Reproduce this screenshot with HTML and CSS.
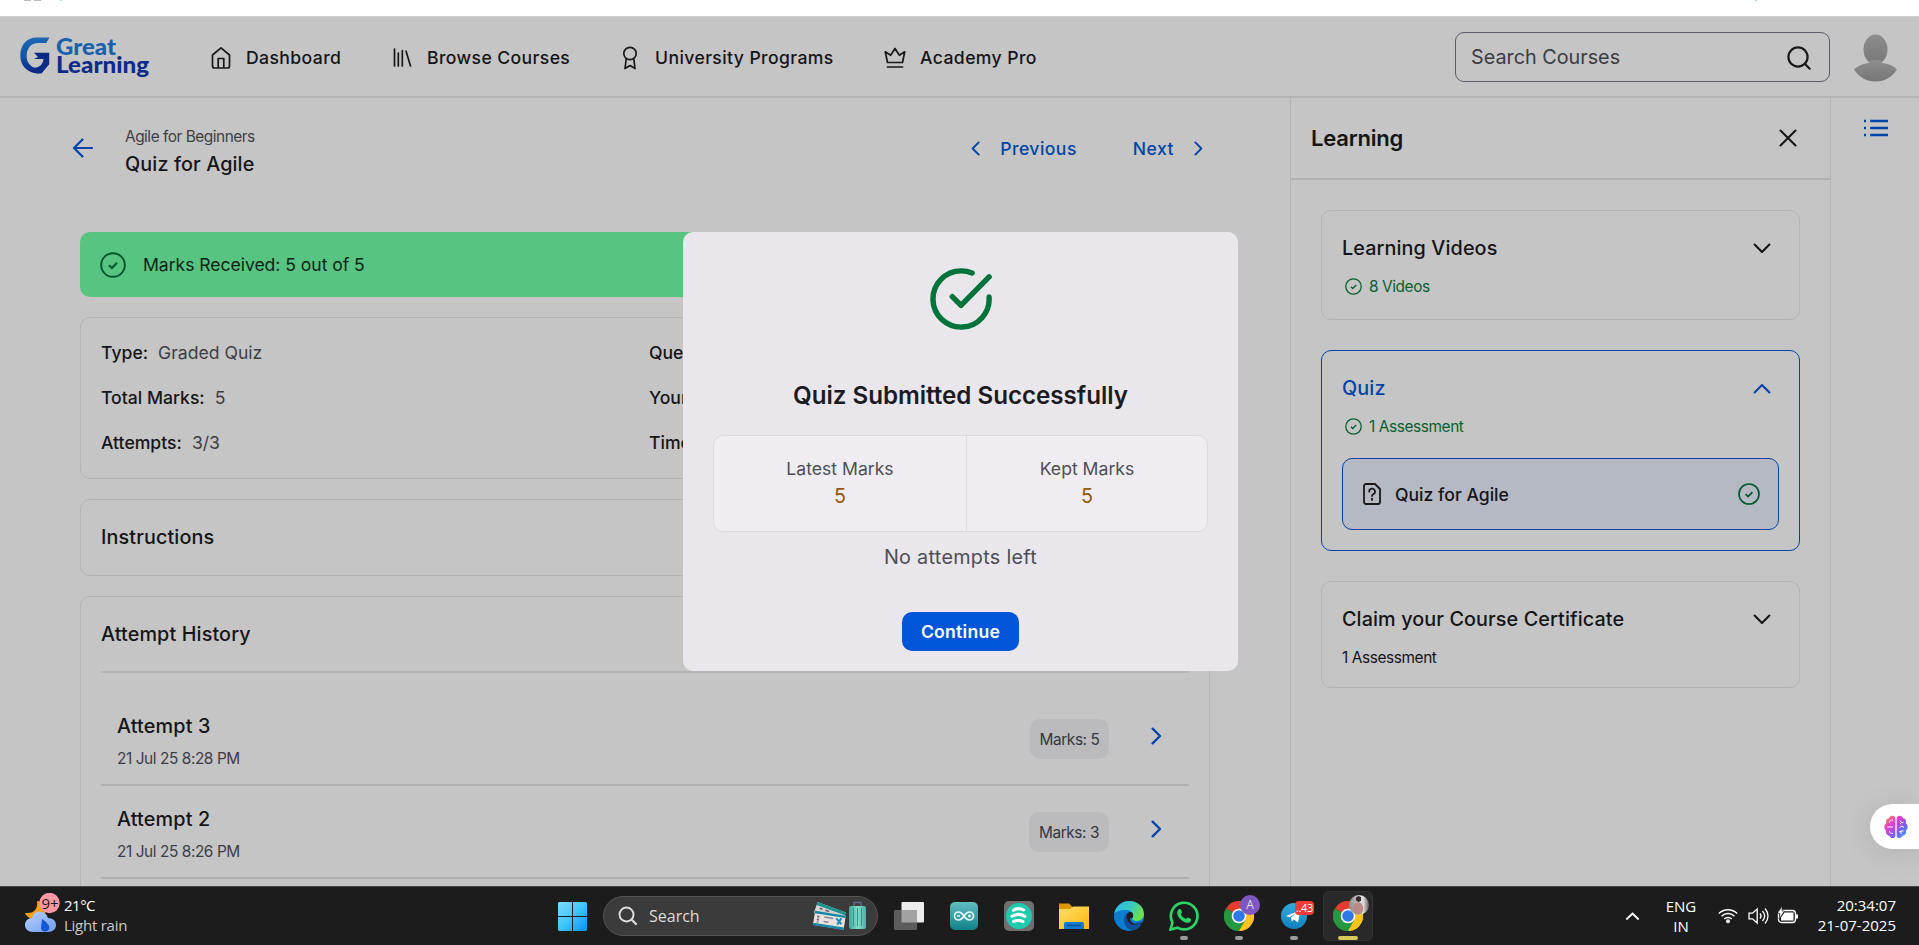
FILE: index.html
```html
<!DOCTYPE html>
<html lang="en">
<head>
<meta charset="utf-8">
<title>Quiz for Agile</title>
<link rel="stylesheet" href="styles.css">
</head>
<body>
<svg class="defs" width="0" height="0">
  <defs>
    <linearGradient id="gMark" x1="0" y1="0" x2="0" y2="1"><stop offset="0" stop-color="#1a69b5"/><stop offset=".55" stop-color="#1552a4"/><stop offset="1" stop-color="#0b2280"/></linearGradient>
    <linearGradient id="win" x1="0" y1="0" x2="1" y2="1"><stop offset="0" stop-color="#7fdcff"/><stop offset=".5" stop-color="#40c4fb"/><stop offset="1" stop-color="#0a93f5"/></linearGradient>
    <linearGradient id="cloud" x1="0" y1="0" x2="1" y2="1"><stop offset="0" stop-color="#b9d2fb"/><stop offset="1" stop-color="#6d9df0"/></linearGradient>
    <linearGradient id="brain" x1="0" y1="0" x2="1" y2="1"><stop offset="0" stop-color="#fb9a3c"/><stop offset=".35" stop-color="#e63ad0"/><stop offset=".65" stop-color="#7a5cf5"/><stop offset="1" stop-color="#22b4fb"/></linearGradient>
    <linearGradient id="man" x1="0" y1="0" x2="0" y2="1"><stop offset="0" stop-color="#8d8d8d"/><stop offset="1" stop-color="#777"/></linearGradient>
    <linearGradient id="folder" x1="0" y1="0" x2="1" y2="1"><stop offset="0" stop-color="#ffdf6b"/><stop offset="1" stop-color="#fbb70c"/></linearGradient>
    <linearGradient id="edgeTop" x1="0" y1="0" x2="1" y2=".4"><stop offset="0" stop-color="#2fb5ee"/><stop offset=".6" stop-color="#37c9c0"/><stop offset="1" stop-color="#6be04e"/></linearGradient>
    <linearGradient id="tg" x1="0" y1="0" x2="0" y2="1"><stop offset="0" stop-color="#33aadf"/><stop offset="1" stop-color="#1280bd"/></linearGradient>
    <linearGradient id="ard" x1="0" y1="0" x2="0" y2="1"><stop offset="0" stop-color="#62bcc1"/><stop offset="1" stop-color="#118288"/></linearGradient>
    <linearGradient id="bag" x1="0" y1="0" x2="1" y2="0"><stop offset="0" stop-color="#3fa79b"/><stop offset=".5" stop-color="#83dccb"/><stop offset="1" stop-color="#4bb3a5"/></linearGradient>
    <symbol id="check" viewBox="0 0 24 24"><circle cx="12" cy="12" r="10.9" fill="none" stroke="currentColor" stroke-width="1.8"/><path d="M8.300 12.200l2.700 2.600 4.700-4.900" fill="none" stroke="currentColor" stroke-width="1.900"/></symbol>
    <symbol id="down" viewBox="0 0 18 11"><path d="M1.6 1.6L9 9l7.4-7.4" fill="none" stroke="currentColor" stroke-width="2.1" stroke-linecap="round" stroke-linejoin="round"/></symbol>
    <symbol id="right" viewBox="0 0 11 18"><path d="M1.6 1.6L9 9l-7.4 7.4" fill="none" stroke="currentColor" stroke-width="2.3" stroke-linecap="round" stroke-linejoin="round"/></symbol>
    <symbol id="chrome" viewBox="0 0 30 30"><path d="M15 15L2 7.500A15 15 0 0 1 28 7.500z" fill="#e33b2e"/><path d="M15 15L28 7.500A15 15 0 0 1 15 30z" fill="#fcc31e"/><path d="M15 15L15 30A15 15 0 0 1 2 7.500z" fill="#24973f"/><path d="M15 7.500h13A15 15 0 0 1 15 30l6.500-11.200z" fill="#fcc31e"/><path d="M8.500 18.700L2 7.500A15 15 0 0 0 15 30l6.500-11.200z" fill="#24973f"/><circle cx="15" cy="15" r="7.300" fill="#fff"/><circle cx="15" cy="15" r="5.800" fill="#2f78ea"/></symbol>
  </defs>
</svg>

<div class="strip"><i class="tick tick-a"></i><i class="tick tick-b"></i><i class="tick tick-c"></i><i class="tick tick-d"></i></div>

<header class="header">
  <svg class="logo" width="132" height="44" viewBox="0 0 132 44">
    <path d="M29.500 2.500H17C7 2.500.300 9.800.300 20.500.300 31 7.500 38 18 38.500l4.800-4.700C13 34.300 6.600 29.500 6.600 21 6.600 12.500 11.800 8 18.500 8h7.800z" fill="url(#gMark)"/>
    <path d="M14 17.800h15.200v11.400L21.500 38.500H17l-3-5.800c4.500.600 8.800-2.700 9.500-8.600H14l4-2z" fill="#0b2a86"/>
    <text class="logo-great" x="36" y="20.400" textLength="60" lengthAdjust="spacingAndGlyphs">Great</text>
    <text class="logo-learning" x="36" y="38.300" textLength="93" lengthAdjust="spacingAndGlyphs">Learning</text>
  </svg>
  <nav class="nav">
    <a class="nav-item"><svg class="ic" width="26" height="26" viewBox="0 0 26 26"><path d="M4.500 10L13 2.800l8.500 7.200v11a2 2 0 0 1-2 2h-13a2 2 0 0 1-2-2zM10.200 23v-9.500h5.600V23"/></svg><span>Dashboard</span></a>
    <a class="nav-item"><svg class="ic" width="26" height="26" viewBox="0 0 26 26"><path d="M5.500 4v17M9.300 8v13M13.300 5.500V21M17 6l4.500 15"/></svg><span>Browse Courses</span></a>
    <a class="nav-item"><svg class="ic" width="26" height="26" viewBox="0 0 26 26"><circle cx="13" cy="8.500" r="6.200"/><path d="M9.200 14l-1.200 9.500 5-3 5 3L16.800 14"/></svg><span>University Programs</span></a>
    <a class="nav-item"><svg class="ic" width="26" height="26" viewBox="0 0 26 26"><path d="M5.500 17.500L3.300 6.800l5.300 3.500L13 3.500l4.400 6.800 5.300-3.500-2.200 10.700zM5.500 22h15"/></svg><span>Academy Pro</span></a>
  </nav>
  <div class="search"><span>Search Courses</span><svg class="ic ic-search" width="26" height="26" viewBox="0 0 26 26"><circle cx="12" cy="12" r="9.600"/><path d="M18.800 18.800l4.900 4.900"/></svg></div>
  <svg class="avatar" width="43" height="48" viewBox="0 0 43 48"><ellipse cx="21.500" cy="15.500" rx="12" ry="15" fill="url(#man)"/><path d="M16 26h11l1 3c8 1 12 3.500 15 6.500C38 43 31 47.500 21.500 47.500S5 43 0 35.500C3 32.500 7 30 15 29z" fill="url(#man)"/></svg>
</header>

<div class="body">
  <main class="main">
    <div class="crumbs">
      <svg class="back" width="22" height="22" viewBox="0 0 22 22"><path d="M20 11H2.500M10.500 2.500L2 11l8.500 8.500"/></svg>
      <div class="crumb-text"><span class="course">Agile for Beginners</span><span class="lesson">Quiz for Agile</span></div>
      <div class="pager">
        <svg class="chev flip" width="9" height="15"><use href="#right"/></svg><span class="prev">Previous</span>
        <span class="next">Next</span><svg class="chev" width="9" height="15"><use href="#right"/></svg>
      </div>
    </div>

    <div class="stack">
      <div class="banner"><svg width="26" height="26"><use href="#check"/></svg><span>Marks Received: 5 out of 5</span></div>

      <section class="card details">
        <div><b>Type:</b><span>Graded Quiz</span></div><div><b>Questions:</b></div>
        <div><b>Total Marks:</b><span>5</span></div><div><b>Your Marks:</b></div>
        <div><b>Attempts:</b><span>3/3</span></div><div><b>Time:</b></div>
      </section>

      <section class="card instructions"><h2>Instructions</h2></section>

      <section class="card history">
        <h2>Attempt History</h2>
        <div class="attempt first">
          <div class="attempt-text"><h3>Attempt 3</h3><span>21 Jul 25 8:28 PM</span></div>
          <span class="badge">Marks: 5</span>
          <svg class="go" width="11" height="18"><use href="#right"/></svg>
        </div>
        <div class="attempt">
          <div class="attempt-text"><h3>Attempt 2</h3><span>21 Jul 25 8:26 PM</span></div>
          <span class="badge wide">Marks: 3</span>
          <svg class="go" width="11" height="18"><use href="#right"/></svg>
        </div>
      </section>
    </div>
  </main>

  <aside class="learning">
    <div class="learning-head"><h1>Learning</h1><svg class="close" width="18" height="18" viewBox="0 0 18 18"><path d="M1.500 1.500l15 15M16.500 1.500l-15 15"/></svg></div>
    <div class="modules">
      <section class="module videos">
        <div class="module-head"><h2>Learning Videos</h2><svg width="18" height="11"><use href="#down"/></svg></div>
        <p class="done"><svg width="17" height="17"><use href="#check"/></svg>8 Videos</p>
      </section>
      <section class="module active">
        <div class="module-head"><h2>Quiz</h2><svg class="up" width="18" height="11"><use href="#down"/></svg></div>
        <p class="done"><svg width="17" height="17"><use href="#check"/></svg>1 Assessment</p>
        <div class="item"><svg class="file" width="18" height="22" viewBox="0 0 18 22"><path d="M3 1h9l5 5v13a2 2 0 0 1-2 2H3a2 2 0 0 1-2-2V3a2 2 0 0 1 2-2zM6.200 8.600a2.900 2.900 0 1 1 4 2.600c-.900.400-1.200.900-1.200 1.900M9 15.600v1.400"/></svg><span>Quiz for Agile</span><svg class="item-ok" width="22" height="22"><use href="#check"/></svg></div>
      </section>
      <section class="module claim">
        <div class="module-head"><h2>Claim your Course Certificate</h2><svg width="18" height="11"><use href="#down"/></svg></div>
        <p>1 Assessment</p>
      </section>
    </div>
  </aside>

  <div class="rail"><svg width="25" height="18" viewBox="0 0 25 18"><path d="M7.200 2H25M7.200 9H25M7.200 16H25M1 2h2M1 9h2M1 16h2"/></svg></div>
</div>

<div class="modal">
  <svg class="modal-check" width="62" height="62" viewBox="0 0 64 64"><path d="M43.500 5.200A29 29 0 0 0 32 3 29 29 0 1 0 61 30M23 29.500l9 9L61 9.200"/></svg>
  <h2>Quiz Submitted Successfully</h2>
  <div class="score">
    <div><span class="score-label">Latest Marks</span><span class="score-value">5</span></div>
    <div><span class="score-label">Kept Marks</span><span class="score-value">5</span></div>
  </div>
  <p>No attempts left</p>
  <button class="continue">Continue</button>
</div>

<div class="assistant"><svg width="24" height="24" viewBox="0 0 24 24"><path d="M11.300 2.500C9.500-.300 5.600.500 5 3.300 2.500 3.500 1.500 6 2.300 8-.300 10-.300 13.500 2 15.500c-.600 3 1 5 3.500 5.200 1 2.800 4.500 3.200 5.800.800zM12.700 2.500C14.500-.300 18.400.500 19 3.300c2.500.200 3.500 2.700 2.700 4.700 2.600 2 2.600 5.500.300 7.500.600 3-1 5-3.500 5.200-1 2.800-4.500 3.200-5.800.800z" fill="url(#brain)"/><path d="M3 12h6M5.500 7.500c0-2 1.500-2.500 3.500-2.500M5.500 16c0 2 1.500 2.500 3.500 2.500M16 5.500l1.500 2h2M17.500 7.500L16 9M15.500 12.500l2.500-1.500 2 1.500M15 17l2-1h2.500M17 16v3" fill="none" stroke="#fff" stroke-width="1"/></svg></div>

<footer class="taskbar">
  <div class="weather">
    <svg width="36" height="42" viewBox="0 0 36 42"><path d="M12 8c1 7-2 13-12 12 3 7 14 9 20 2L22 10z" fill="#f5a01d"/><path d="M8 39C3 39 0 36 0 32c0-4 3-7 7-7 1-5 5-7 9-6 4 0 6 3 7 6 5 0 8 3 8 7s-3 7-8 7z" fill="url(#cloud)"/><path d="M17 26c6 4 8 7 7 10-2 4-8 3-8-1z" fill="#1457dc"/><circle cx="24.500" cy="10" r="10.200" fill="#fe98a2"/><text class="nine" x="16.500" y="15.500">9+</text></svg>
    <div class="weather-text"><span>21°C</span><span class="dim">Light rain</span></div>
  </div>
  <div class="apps">
    <svg class="start" width="29" height="29" viewBox="0 0 29 29"><path d="M1 0h13v14H0V1zM15 0h13l1 1v13H15zM0 15h14v14H1l-1-1zM15 15h14v13l-1 1H15z" fill="url(#win)"/></svg>
    <div class="tsearch"><svg width="20" height="20" viewBox="0 0 20 20"><circle cx="8.500" cy="8.500" r="7" fill="none" stroke="#dedede" stroke-width="1.900"/><path d="M13.500 13.500l4.500 4.500" stroke="#dedede" stroke-width="2.200" stroke-linecap="round"/></svg><span>Search</span>
      <svg class="trip" width="54" height="32" viewBox="0 0 54 32"><g transform="rotate(20 4 4)"><rect x="4" y="2" width="30" height="11" fill="#d9d6cf"/><path d="M4 3.500h30" stroke="#1b9490" stroke-width="3"/><path d="M8 7h3M14 7h4" stroke="#6b5f78" stroke-width="1.600"/></g><g transform="rotate(9 2 12)"><rect x="2" y="11" width="31" height="14" fill="#e7e3dc"/><path d="M2 12h31M2 24h31" stroke="#1787a8" stroke-width="2.400"/><path d="M6 15v7" stroke="#6b5f78" stroke-width="2" stroke-dasharray="2 1"/><path d="M12 15.500h9M12 20h5" stroke="#8b8398" stroke-width="1.600"/><path d="M24 15l6 5M29 14l-3 7" stroke="#2488b7" stroke-width="2"/></g><path d="M41 6V2.500h7V6" fill="none" stroke="#66698c" stroke-width="1.400"/><rect x="36" y="6" width="17" height="23" rx="2" fill="url(#bag)"/><path d="M40.500 8v18M44.500 8v18M48.500 8v18" stroke="#2e9587" stroke-width="1"/></svg>
    </div>
    <span class="app"><svg width="30" height="28" viewBox="0 0 30 28"><rect x="7.500" width="22.500" height="20.500" rx="1" fill="#ececec"/><rect y="8" width="23" height="20" rx="1" fill="#5c5c5c"/><rect x="7.500" y="8" width="15.500" height="12.500" fill="#a2a2a2"/></svg></span>
    <span class="app"><svg width="28" height="28" viewBox="0 0 28 28"><rect width="28" height="28" rx="5" fill="url(#ard)"/><path d="M14 14c-2-3-4-4-5.500-4a4 4 0 0 0 0 8c1.500 0 3.500-1 5.500-4zc2-3 4-4 5.500-4a4 4 0 0 1 0 8c-1.500 0-3.500-1-5.500-4zM7 14h3M18 14h3M19.500 12.500v3" fill="none" stroke="#e8f7f7" stroke-width="1.700"/></svg></span>
    <span class="app"><svg width="30" height="30" viewBox="0 0 30 30"><rect width="30" height="30" rx="5" fill="#6f6f6f"/><circle cx="15" cy="15" r="13" fill="#21c9ae"/><path d="M9.500 9.300c3-2 7-2 10-.300M8 15.300c4.500-2.500 9.500-2.300 13 .200M9.500 20.500c3.500-1.500 6.500-1.500 9.500 0" fill="none" stroke="#fff" stroke-width="3" stroke-linecap="round"/></svg></span>
    <span class="app"><svg width="30" height="28" viewBox="0 0 30 28"><path d="M0 1.500h10l3 3V8H0z" fill="#dd9702"/><path d="M0 7h11l3-2.500h16V27H0z" fill="url(#folder)"/><path d="M5 27v-5a2 2 0 0 1 2-2h16a2 2 0 0 1 2 2v5z" fill="#1279d0"/><path d="M8 23.500h14" stroke="#0b4c91" stroke-width="1.300"/></svg></span>
    <span class="app"><svg width="30" height="30" viewBox="0 0 30 30"><circle cx="15" cy="15" r="15" fill="#0b7ed4"/><path d="M0 13C2 4 9 0 15 0c9 0 15 6 15 13 0 4-3 7-7 7-3 0-5-1-5-2.500 0-1 1-2 1-3.500 0-3-3-5-7-5C6 9 1 11 0 13z" fill="url(#edgeTop)"/><path d="M10 18c0-4 3-6 6-6-3 2-1 10 5 10 3 0 5-1 6-1.500 1 0 1 .500.500 1.500-2 4-5 6.500-9 7.500C13 28 10 24 10 18z" fill="#0d4f9b"/><path d="M18 17.500c1-1 2-3 .500-5.500-2-2-6-.500-6 3 0 4 3 9 9 9 3 0 6-1.500 7.500-3.500l1 .500-2 4-2-2C21 25 16 22 16 17z" fill="#1c1c1c"/></svg></span>
    <span class="app run"><svg width="30" height="30" viewBox="0 0 30 30"><path d="M1.500 28.500l2-7A13.300 13.300 0 1 1 8.500 26.600z" fill="none" stroke="#2cd366" stroke-width="2.700"/><path d="M9.500 8.500c1-1 2-.800 2.500.300l1 2.300c.300.800-1.200 1.700-1 2.400 1 2 2.500 3.500 4.700 4.300.800.300 1.500-1.500 2.300-1.300l2.500 1.200c1 .500.700 1.700 0 2.700-1.500 2-5 1.600-8-.500-3-2-5-5-5.300-7.200-.200-1.700.500-3.200 1.300-4.200z" fill="#2cd366"/></svg></span>
    <span class="app run"><svg width="30" height="30"><use href="#chrome"/></svg><i class="bubble purple">A</i></span>
    <span class="app run"><svg width="26" height="26" viewBox="0 0 26 26"><circle cx="13" cy="13" r="13" fill="url(#tg)"/><path d="M5 13L19.500 7.300 17 19.500l-4.200-3-2 2-.800-4 6-5-7.500 4.700z" fill="#fff"/></svg><i class="count">..43</i></span>
    <span class="app run current"><svg width="30" height="30"><use href="#chrome"/></svg><i class="bubble photo"></i></span>
  </div>
  <div class="tray">
    <svg class="tray-up" width="15" height="9" viewBox="0 0 15 9"><path d="M1.300 7.500l6.200-6 6.200 6" fill="none" stroke="#fff" stroke-width="1.800"/></svg>
    <div class="lang"><span>ENG</span><span>IN</span></div>
    <svg class="wifi" width="20" height="17" viewBox="0 0 20 17"><path d="M.800 6.500a13 13 0 0 1 18.400 0M3.500 9.200a9.200 9.200 0 0 1 13 0M6.200 12a5.400 5.400 0 0 1 7.600 0" fill="none" stroke="#fff" stroke-width="1.400"/><circle cx="10" cy="14.300" r="2" fill="#fff"/></svg>
    <svg class="sound" width="21" height="18" viewBox="0 0 21 18"><path d="M1 6.200h3.500L9.200 2v14l-4.700-4.200H1zM12 6.500c1.300 1.500 1.300 3.500 0 5M14.500 4c2.600 3 2.600 7 0 10M17 1.500c4 4.500 4 10.500 0 15" fill="none" stroke="#fff" stroke-width="1.300"/></svg>
    <svg class="battery" width="22" height="18" viewBox="0 0 22 18"><rect x="1.500" y="4.500" width="17" height="12" rx="3" fill="none" stroke="#fff" stroke-width="1.300"/><path d="M7.500 6.500h9v8H4v-3zM19 8.500h2v4h-2z" fill="#fff"/><path d="M5 0L.500 7.500H3L2 13l5.500-8H5z" fill="#fff" stroke="#1c1c1c" stroke-width=".6"/></svg>
    <div class="clock"><span>20:34:07</span><span>21-07-2025</span></div>
  </div>
</footer>
</body>
</html>
```
FILE: styles.css
```css
* { box-sizing: border-box; }
body {
  margin: 0;
  width: 1919px;
  height: 945px;
  overflow: hidden;
  display: flex;
  flex-direction: column;
  background: #c5c5c5;
  color: #151518;
  font-family: Inter, "Liberation Sans", sans-serif;
  font-size: 17.6px;
  position: relative;
}
h1, h2, h3, p { margin: 0; }
svg { display: block; flex: none; }
.defs { position: absolute; }

/* top strip */
.strip { height: 16px; flex: none; background: #fff; display: flex; align-items: flex-start; }
.tick { height: 1px; background: #b9b9b9; width: 7px; flex: none; }
.tick-a { margin-left: 24px; }
.tick-b { margin-left: 3px; }
.tick-c { margin-left: 19px; width: 2px; background: #9fe3e3; }
.tick-d { margin-left: 1693px; width: 2px; background: #9fe3e3; }

/* header */
.header {
  height: 82px;
  flex: none;
  border-top: 1px solid #cfcfcf;
  border-bottom: 2px solid #b5b5b5;
  display: flex;
  align-items: center;
}
.logo { margin-left: 20px; overflow: visible; }
.logo text { font-family: Lato, "Open Sans", sans-serif; font-weight: 900; font-size: 23px; }
.logo-great { fill: #1960ab; }
.logo-learning { fill: #0c2b8b; }
.nav { margin-left: 56px; padding-top: 2px; display: grid; grid-template-columns: 181px 228px 265px 170px; font-weight: 500; }
.nav-item { display: flex; align-items: center; gap: 12px; white-space: nowrap; letter-spacing: .4px; }
.ic { fill: none; stroke: #18181b; stroke-width: 1.7; stroke-linecap: round; stroke-linejoin: round; }
.search {
  margin-left: auto;
  width: 375px;
  height: 50px;
  border: 1px solid #5d5d68;
  border-radius: 9px;
  padding: 0 17px 0 15px;
  display: flex;
  align-items: center;
  justify-content: space-between;
  color: #3b3c43;
  font-size: 19.8px;
}
.ic-search { stroke-width: 2.2; margin-top: 3px; }
.avatar { margin: 3px 22px 0 24px; }

/* page body */
.body { height: 788px; flex: none; display: flex; overflow: hidden; }
.main { width: 1290px; padding: 0 80px; }
.crumbs { height: 134px; display: flex; align-items: flex-start; position: relative; left: -8px; width: 1145px; }
.back { margin-top: 39px; fill: none; stroke: #0344a8; stroke-width: 2.2; stroke-linecap: round; stroke-linejoin: round; }
.crumb-text { display: flex; flex-direction: column; margin: 27px 0 0 31px; }
.course { font-size: 15.4px; line-height: 24px; color: #3d3e45; letter-spacing: -.47px; }
.lesson { font-size: 19.8px; line-height: 30px; font-weight: 500; letter-spacing: .1px; }
.pager { margin: 36px 14px 0 auto; display: flex; align-items: center; height: 28px; color: #0344a8; font-weight: 500; letter-spacing: .45px; }
.prev { margin: 0 56px 0 20px; }
.next { margin-right: 20px; }
.flip { transform: scaleX(-1); }

.stack { display: flex; flex-direction: column; gap: 20px; }
.banner { height: 65px; border-radius: 10px; background: #57c481; display: flex; align-items: center; padding-left: 20px; gap: 17px; color: #0e2418; letter-spacing: -.05px; }
.banner svg { color: #00562d; }
.card { border: 1px solid #b4b4b6; border-radius: 10px; }
.details { height: 162px; padding: 12px 20px; display: grid; grid-template-columns: 548px 1fr; grid-auto-rows: 45px; align-items: center; }
.details b { font-weight: 500; margin-right: 10px; }
.details span { color: #3d3e45; }
.card h2 { font-size: 19.8px; font-weight: 500; letter-spacing: .12px; }
.instructions { height: 77px; padding: 0 20px 1px; display: flex; align-items: center; }
.history { height: 400px; padding: 0 20px; }
.history h2 { height: 76px; line-height: 75px; border-bottom: 2px solid #b5b5b5; }
.attempt { height: 93px; border-bottom: 2px solid #b1b1b1; padding: 15px 27px 0 16px; display: flex; }
.attempt.first { height: 113px; padding-top: 35px; }
.attempt-text { flex: 1; }
.attempt h3 { margin: 0; font-size: 19.8px; font-weight: 500; line-height: 36px; letter-spacing: .15px; }
.attempt-text span { display: block; font-size: 15.4px; line-height: 30px; color: #3d3e45; letter-spacing: -.42px; }
.badge { width: 79px; height: 40px; margin: 11px 42px 0 0; border-radius: 10px; background: #bbbbbe; color: #35363c; font-size: 15.4px; letter-spacing: -.42px; display: flex; align-items: center; justify-content: center; }
.badge.wide { width: 80px; }
.go { color: #0344a8; margin-top: 19px; }

/* learning panel */
.learning { width: 541px; border-left: 1px solid #b4b4b6; border-right: 1px solid #b4b4b6; }
.learning-head { height: 82px; border-bottom: 2px solid #b2b2b2; padding: 0 33px 0 20px; display: flex; align-items: center; justify-content: space-between; }
.learning-head h1 { font-size: 22px; font-weight: 600; letter-spacing: -.2px; }
.close { fill: none; stroke: #151518; stroke-width: 2.1; stroke-linecap: round; }
.modules { padding: 30px 30px 0; display: flex; flex-direction: column; gap: 30px; }
.module { border: 1px solid #b4b4b6; border-radius: 10px; padding: 17px 20px; }
.module-head { height: 40px; display: flex; align-items: center; justify-content: space-between; padding-right: 8px; }
.module h2 { font-size: 19.8px; font-weight: 500; letter-spacing: .1px; }
.module p { height: 37px; display: flex; align-items: center; font-size: 15.4px; letter-spacing: -.4px; }
.module .done { color: #07602f; gap: 7px; padding-left: 3px; }
.videos { height: 110px; }
.active { height: 201px; border-color: #0344a8; }
.active .module-head { color: #0344a8; }
.up { transform: scaleY(-1); }
.claim { height: 107px; }
.claim p { height: 36px; }
.item { margin-top: 13px; height: 72px; border: 1px solid #0344a8; border-radius: 10px; background: #b5b9c4; display: flex; align-items: center; padding: 0 18px 0 20px; font-weight: 500; }
.file { fill: none; stroke: #18181b; stroke-width: 1.8; stroke-linecap: round; stroke-linejoin: round; margin-right: 14px; }
.item-ok { margin-left: auto; color: #00592e; }
.rail { flex: 1; padding: 21px 0 0 32px; }
.rail svg { fill: none; stroke: #0344a8; stroke-width: 2.4; }

/* result dialog */
.modal {
  position: absolute;
  left: 683px;
  top: 232px;
  width: 555px;
  height: 439px;
  border-radius: 10px;
  background: #e9e7ec;
  display: flex;
  flex-direction: column;
  align-items: center;
}
.modal-check { margin-top: 36px; fill: none; stroke: #00733a; stroke-width: 5.6; stroke-linecap: round; stroke-linejoin: round; }
.modal h2 { margin-top: 48px; height: 36px; line-height: 36px; font-size: 24.2px; font-weight: 600; color: #1b1b21; letter-spacing: -.03px; }
.score { margin-top: 21px; width: 495px; height: 97px; border: 1px solid #dbdadf; border-radius: 10px; background: #efedf2; display: grid; grid-template-columns: 253px 1fr; }
.score > div { display: flex; flex-direction: column; align-items: center; padding-top: 19px; }
.score > div:first-child { border-right: 1px solid #dbdadf; }
.score-label { font-size: 17.6px; line-height: 28px; color: #4d4e55; }
.score-value { font-size: 19.8px; line-height: 27px; color: #98560b; }
.modal p { margin-top: 10px; font-size: 19.8px; line-height: 30px; color: #4d4e55; letter-spacing: .3px; }
.continue { margin-top: 40px; width: 117px; height: 39px; border: 0; border-radius: 10px; background: #0055d8; color: #fff; font: 600 17.6px Inter, sans-serif; letter-spacing: .25px; padding: 0; }

.assistant { position: absolute; right: 0; top: 804px; width: 49px; height: 45px; border-radius: 23px 0 0 23px; background: #fff; box-shadow: 0 4px 30px rgba(0,0,0,.1); display: flex; align-items: center; padding-left: 14px; }

/* taskbar */
.taskbar {
  height: 59px;
  flex: none;
  position: relative;
  background: #1c1c1c;
  border-top: 1px solid #454545;
  color: #fff;
  font-family: "Open Sans", "Noto Sans", sans-serif;
  font-size: 15px;
  display: flex;
  align-items: flex-start;
}
.weather { width: 558px; padding: 6px 0 0 25px; display: flex; }
.weather-text { display: flex; flex-direction: column; line-height: 20px; margin: 2px 0 0 3px; }
.weather-text span { letter-spacing: -.5px; }
.weather-text .dim { color: #c9c9c9; letter-spacing: -.25px; }
.nine { font: 15px "Open Sans", sans-serif; fill: #1c1c1c; }
.apps { display: flex; }
.start { margin-top: 15px; }
.tsearch { margin: 9px 3px 0 16px; width: 275px; height: 40px; border: 1px solid #555; border-radius: 20px; background: #3b3b3b; display: flex; align-items: center; padding: 0 10px 0 14px; color: #dcdcdc; font-size: 16px; }
.tsearch span { margin-left: 11px; flex: 1; }
.app { width: 55px; height: 58px; display: flex; align-items: center; justify-content: center; position: relative; }
.run::after { content: ""; position: absolute; bottom: 5px; left: 24px; width: 8px; height: 4px; border-radius: 2px; background: #9a9a9a; }
.current { width: 50px; height: 50px; margin: 4px 0 0 2px; border-radius: 6px; background: #292929; border: 1px solid #333; }
.current::after { bottom: 0; left: 14px; width: 20px; background: #d7cc5b; }
.bubble { position: absolute; left: 29px; top: 8px; width: 20px; height: 20px; border-radius: 50%; font-style: normal; font-size: 12px; line-height: 20px; text-align: center; color: #ddd; }
.purple { background: #7e57c2; }
.photo { left: 25px; top: 3px; background: radial-gradient(circle at 48% 20%, #3c2823 0 13%, transparent 15%), radial-gradient(ellipse at 45% 68%, #b98a86 0 30%, transparent 36%), linear-gradient(90deg, #8b8c8e, #e1e2e5 70%, #6b5c58); }
.count { position: absolute; left: 29px; top: 14px; width: 19px; height: 14px; border-radius: 4px; background: #f03c36; font-style: normal; font-size: 11px; line-height: 14px; text-align: center; letter-spacing: -.4px; }
.tray { margin-left: auto; display: flex; padding-right: 23px; }
.tray-up { margin: 25px 26px 0 0; }
.lang { width: 30px; margin: 9px 22px 0 0; display: flex; flex-direction: column; align-items: center; line-height: 20px; }
.wifi { margin: 20px 10px 0 0; }
.sound { margin: 20px 8px 0 0; }
.battery { margin: 19px 0 0; }
.clock { width: 97px; margin-top: 8px; display: flex; flex-direction: column; align-items: flex-end; line-height: 20px; }
```
